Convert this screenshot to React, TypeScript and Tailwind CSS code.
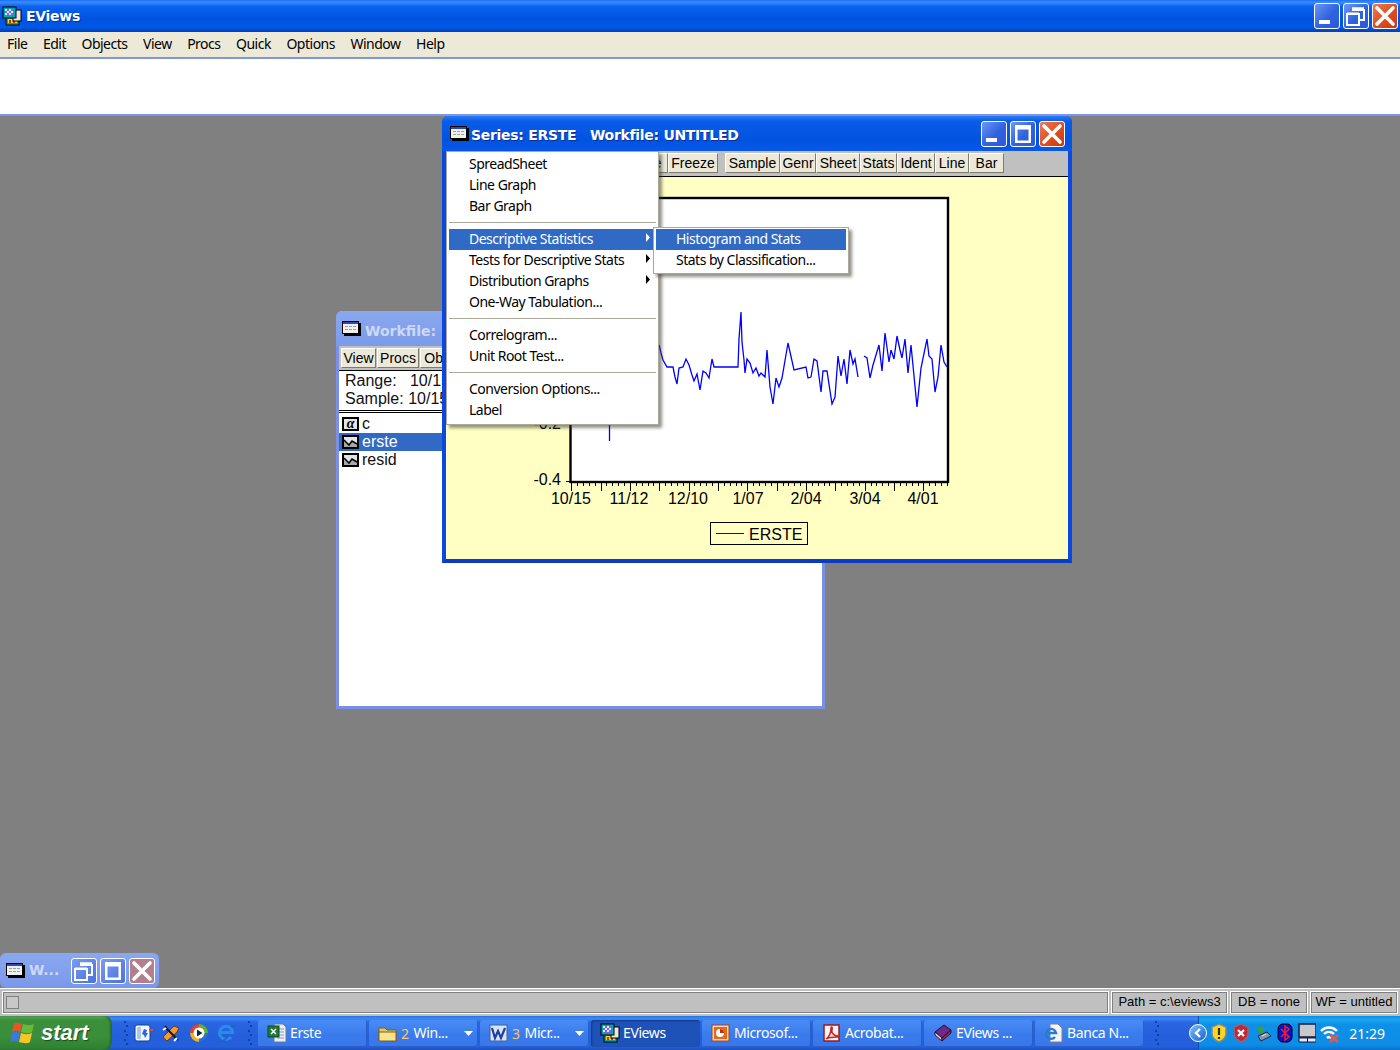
import React from 'react';

const UI = "font-['Noto_Sans',sans-serif]";
const ARIAL = "font-['Liberation_Sans',Arial,sans-serif]";
const TITLE = "font-['DejaVu_Sans',sans-serif] font-bold text-white [text-shadow:1px_1px_0_#0a2f9a]";

const MENU_BAR = ['File', 'Edit', 'Objects', 'View', 'Procs', 'Quick', 'Options', 'Window', 'Help'];

const seg1 = [[659, 345], [661, 353], [663, 360], [667, 367], [673, 367], [675, 377], [677, 384], [679, 368], [683, 367], [686, 359], [689, 365], [692, 375], [694, 381], [697, 374], [700, 390], [703, 371], [706, 373], [709, 378], [712, 359], [714, 367], [738, 367], [739, 339], [741, 312], [742, 342], [744, 360], [745, 373], [747, 359], [750, 363], [753, 373], [756, 368], [759, 376], [761, 373], [765, 377], [767, 350], [770, 387], [773, 404], [776, 378], [779, 387], [782, 378], [788, 343], [794, 370], [806, 367], [808, 378], [811, 377], [814, 359], [817, 361], [821, 392], [823, 371], [827, 371], [832, 404], [835, 397], [838, 356], [841, 376], [844, 359], [847, 384], [850, 350], [853, 364], [855, 359], [858, 377]];
const seg2 = [[864, 356], [867, 358], [870, 378], [873, 365], [879, 345], [882, 371], [885, 333], [889, 362], [891, 350], [894, 359], [897, 336], [900, 350], [902, 358], [905, 339], [908, 373], [911, 345], [917, 407], [921, 368], [927, 339], [929, 356], [932, 359], [935, 392], [938, 377], [941, 345], [944, 362], [947, 367]];
const toPoints = (s: number[][]) => s.map(p => p.join(',')).join(' ');

const EViewsIcon = () => (
  <svg width="20" height="20" viewBox="0 0 20 20" className="shrink-0">
    <rect x="4" y="10" width="13" height="9" fill="#00a8a8" stroke="#000" />
    <rect x="6" y="13" width="9" height="4" fill="#ffd800" />
    <rect x="7" y="14" width="2" height="3" fill="#e02010" />
    <rect x="11" y="14" width="2" height="3" fill="#e02010" />
    <rect x="11" y="4" width="8" height="11" fill="#e8e8e8" stroke="#000" />
    <rect x="1" y="1" width="13" height="11" fill="#00a8a8" stroke="#000" />
    <rect x="3" y="3" width="9" height="7" fill="#6868f0" />
    <path d="M3 3h2v2h-2zM7 3h2v2h-2zM5 5h2v2h-2zM9 5h2v2h-2zM3 7h2v2h-2zM7 7h2v2h-2z" fill="#e8e8ff" />
  </svg>
);

const SeriesIcon = () => (
  <svg width="19" height="15" viewBox="0 0 19 15" className="shrink-0">
    <rect x="2" y="2" width="17" height="13" fill="#000" />
    <rect x="0.5" y="0.5" width="16" height="12" fill="#f0f0f0" stroke="#000" />
    <rect x="1" y="1" width="15" height="2" fill="#2a4ab0" />
    <path d="M3 5h3v1h-3zM7 5h3v1h-3zM11 5h3v1h-3zM3 8h3v1h-3zM7 8h3v1h-3zM11 8h3v1h-3z" fill="#a0a0a0" />
  </svg>
);

const CaptionButton = ({ kind, faded }: { kind: 'min' | 'max' | 'restore' | 'close'; faded?: boolean }) => {
  const bg =
    kind === 'close'
      ? faded
        ? 'bg-[#b0808f]'
        : 'bg-[linear-gradient(135deg,#ee7a55,#dd4a1c_60%,#c93a10)]'
      : faded
        ? 'bg-[linear-gradient(135deg,#7a9bee,#4a72e0)]'
        : 'bg-[linear-gradient(135deg,#6f96f5,#2f62e0_55%,#2a5adf)]';
  return (
    <div className={`flex h-[26px] w-[26px] items-center justify-center rounded-[3px] border border-white ${bg}`}>
      <svg width="24" height="24" viewBox="0 0 24 24">
        {kind === 'min' && <rect x="4" y="16" width="11" height="4" fill="#fff" />}
        {kind === 'max' && (
          <path d="M4 3h16v18h-16z M6.500 7.500v11h11v-11z" fill="#fff" fillRule="evenodd" />
        )}
        {kind === 'restore' && (
          <g fill="none" stroke="#fff" strokeWidth="2">
            <rect x="3" y="10" width="12" height="11" />
            <path d="M3 9.500h12M8 6h12v10h-4" />
            <path d="M8 4.500h12" strokeWidth="2.500" />
          </g>
        )}
        {kind === 'close' && (
          <path d="M4 4l16 16M20 4l-16 16" stroke="#fff" strokeWidth="3.600" strokeLinecap="round" />
        )}
      </svg>
    </div>
  );
};

const ToolButton = ({ label, width }: { label: string; width: string }) => (
  <div
    className={`flex h-[20px] shrink-0 items-center justify-center border border-t-white border-l-white border-r-[#7d7b6c] border-b-[#7d7b6c] bg-[#ece9d8] pb-[1px] text-[14px] leading-none text-black ${ARIAL} ${width}`}
  >
    {label}
  </div>
);

const MenuRow = ({ label, active, arrow }: { label: string; active?: boolean; arrow?: boolean }) => (
  <div
    className={`relative flex h-[21px] items-center pb-[2px] pl-[20px] text-[14px] leading-none tracking-[-0.5px] ${active ? 'bg-[#316ac5] text-white' : 'text-black'}`}
  >
    {label}
    {arrow && (
      <svg width="6" height="9" viewBox="0 0 6 9" className="absolute right-[5px] top-[4px]">
        <path d="M1 0l4 4.500-4 4.500z" fill={active ? '#fff' : '#000'} />
      </svg>
    )}
  </div>
);

const MenuSep = () => (
  <div className="flex h-[12px] items-center pb-[2px]">
    <div className="h-px w-full bg-[#aca899]" />
  </div>
);

const Chart = () => {
  const ticks = Array.from({ length: 65 }, (_, i) => 571.7 + i * 5.87);
  const labels = [['10/15', 571], ['11/12', 629], ['12/10', 688], ['1/07', 748], ['2/04', 806], ['3/04', 865], ['4/01', 923]] as const;
  return (
    <svg viewBox="446 177 622 382" className={`block h-[382px] w-[622px] ${ARIAL}`}>
      <rect x="570.500" y="198" width="377.500" height="284" fill="#fff" stroke="#000" strokeWidth="2.400" />
      {ticks.map((x, i) => (
        <line key={x} x1={x} x2={x} y1="483" y2={i % 5 === 0 ? 491 : 486} stroke="#000" shapeRendering="crispEdges" />
      ))}
      <line x1="566" x2="570" y1="481" y2="481" stroke="#000" shapeRendering="crispEdges" />
      <polyline points={toPoints(seg1)} fill="none" stroke="#0000ff" strokeWidth="1.300" />
      <polyline points={toPoints(seg2)} fill="none" stroke="#0000ff" strokeWidth="1.300" />
      <line x1="609.500" x2="609.500" y1="415" y2="441" stroke="#0000ff" strokeWidth="1.300" />
      <text x="561" y="429" textAnchor="end" fontSize="16" fill="#000">-0.2</text>
      <text x="561" y="485" textAnchor="end" fontSize="16" fill="#000">-0.4</text>
      {labels.map(([t, x]) => (
        <text key={t} x={x} y="504" textAnchor="middle" fontSize="16" fill="#000">{t}</text>
      ))}
      <rect x="710.500" y="522.500" width="97" height="22" fill="#ffffc4" stroke="#000" shapeRendering="crispEdges" />
      <line x1="716" x2="744" y1="533.500" y2="533.500" stroke="#0000ff" shapeRendering="crispEdges" />
      <text x="749" y="540" fontSize="16" fill="#000">ERSTE</text>
    </svg>
  );
};

const SeriesWindow = () => (
  <div className="absolute left-[442px] top-0 flex h-[447px] w-[630px] flex-col rounded-t-[6px] border-x-4 border-b-4 border-x-[#0a48e0] border-b-[#0a3ac8] bg-[#0a55e6]">
    <div className="-mx-[4px] flex h-[35px] shrink-0 items-center rounded-t-[6px] bg-[linear-gradient(180deg,#2a7cf5_0%,#0a5ce8_15%,#0053e0_70%,#0a58e8_100%)] pl-[8px] pr-[7px]">
      <SeriesIcon />
      <span className={`ml-[2px] mt-[4px] whitespace-pre text-[14px] tracking-[-0.3px] ${TITLE}`}>Series: ERSTE   Workfile: UNTITLED</span>
      <div className="ml-auto flex gap-[3px]">
        <CaptionButton kind="min" />
        <CaptionButton kind="max" />
        <CaptionButton kind="close" />
      </div>
    </div>
    <div className="flex h-[25px] shrink-0 items-start bg-[#c0c0c0] pt-[2px]">
      <div className="w-[172px] shrink-0" />
      <ToolButton label="Name" width="w-[50px]" />
      <ToolButton label="Freeze" width="w-[50px]" />
      <div className="w-[7px]" />
      <ToolButton label="Sample" width="w-[55px]" />
      <ToolButton label="Genr" width="w-[36px]" />
      <ToolButton label="Sheet" width="w-[44px]" />
      <ToolButton label="Stats" width="w-[37px]" />
      <ToolButton label="Ident" width="w-[38px]" />
      <ToolButton label="Line" width="w-[34px]" />
      <ToolButton label="Bar" width="w-[35px]" />
    </div>
    <div className="min-h-0 flex-1 overflow-hidden border-t border-black bg-[#ffffc4]">
      <Chart />
    </div>

    <div className={`absolute left-[0px] top-[35px] w-[213px] border border-[#aca899] bg-white pb-[3px] pt-[2px] shadow-[3px_3px_3px_rgba(60,60,50,0.55)] ${UI}`}>
      <div className="px-[2px]">
        <MenuRow label="SpreadSheet" />
        <MenuRow label="Line Graph" />
        <MenuRow label="Bar Graph" />
        <MenuSep />
        <MenuRow label="Descriptive Statistics" active arrow />
        <MenuRow label="Tests for Descriptive Stats" arrow />
        <MenuRow label="Distribution Graphs" arrow />
        <MenuRow label="One-Way Tabulation..." />
        <MenuSep />
        <MenuRow label="Correlogram..." />
        <MenuRow label="Unit Root Test..." />
        <MenuSep />
        <MenuRow label="Conversion Options..." />
        <MenuRow label="Label" />
      </div>
    </div>
    <div className={`absolute left-[207px] top-[111px] w-[196px] border border-[#aca899] bg-white px-[2px] pb-[2px] pt-[1px] shadow-[3px_3px_3px_rgba(60,60,50,0.55)] ${UI}`}>
      <MenuRow label="Histogram and Stats" active />
      <MenuRow label="Stats by Classification..." />
    </div>
  </div>
);

const ObjectIcon = ({ alpha }: { alpha?: boolean }) => (
  <svg width="17" height="14" viewBox="0 0 17 14" className="shrink-0">
    <rect x="1" y="1" width="15" height="12" fill="#e4e4e4" stroke="#000" strokeWidth="2" />
    {alpha ? (
      <text x="8.500" y="11" textAnchor="middle" fontSize="14" fontWeight="bold" fontStyle="italic" fontFamily="'Liberation Serif',serif" fill="#000">α</text>
    ) : (
      <>
        <path d="M2 5l5 5 3-4 5 3v3H2z" fill="#a8a8a8" />
        <path d="M2 5l5 5 3-4 5 3" fill="none" stroke="#000" strokeWidth="1.500" />
      </>
    )}
  </svg>
);

const WorkfileWindow = () => (
  <div className={`absolute left-[336px] top-[195px] flex h-[398px] w-[489px] flex-col rounded-t-[6px] border-x-[3px] border-b-[3px] border-[#7b8fe4] bg-white ${ARIAL}`}>
    <div className="-mx-[3px] flex h-[35px] shrink-0 items-center rounded-t-[6px] bg-[linear-gradient(180deg,#8aa8f0,#7b9ae8)] pl-[6px]">
      <SeriesIcon />
      <span className="ml-[4px] mt-[5px] font-['DejaVu_Sans',sans-serif] text-[14px] font-bold text-[#cdd9f7]">Workfile: U</span>
    </div>
    <div className="flex h-[24px] shrink-0 items-center gap-[1px] bg-[#c0c0c0] pl-[2px]">
      <ToolButton label="View" width="w-[35px]" />
      <ToolButton label="Procs" width="w-[42px]" />
      <ToolButton label="Objects" width="w-[56px]" />
    </div>
    <div className="h-[40px] shrink-0 border-t border-black pl-[6px] pt-[1px] text-[16px] leading-[18px] text-[#111]">
      <div className="whitespace-pre">Range:   10/15</div>
      <div className="whitespace-pre">Sample: 10/15</div>
    </div>
    <div className="h-[3px] shrink-0 border-y border-black" />
    <div className="pt-[2px] text-[16px] leading-[18px] text-[#111]">
      <div className="flex h-[18px] items-center gap-[3px] pb-[1px] pl-[3px]"><ObjectIcon alpha />c</div>
      <div className="flex h-[18px] items-center gap-[3px] bg-[#316ac5] pb-[1px] pl-[3px] text-white"><ObjectIcon />erste</div>
      <div className="flex h-[18px] items-center gap-[3px] pb-[1px] pl-[3px]"><ObjectIcon />resid</div>
    </div>
  </div>
);

const MinimizedWindow = () => (
  <div className="absolute bottom-0 left-0 flex h-[35px] w-[159px] items-center rounded-[6px] bg-[linear-gradient(180deg,#8aa8f0,#7a98e8)] pl-[6px] pr-[4px]">
    <SeriesIcon />
    <span className="ml-[4px] font-['DejaVu_Sans',sans-serif] text-[14px] font-bold text-[#cdd9f7]">W...</span>
    <div className="ml-auto flex gap-[3px]">
      <CaptionButton kind="restore" faded />
      <CaptionButton kind="max" faded />
      <CaptionButton kind="close" faded />
    </div>
  </div>
);

const StatusPanel = ({ text, width }: { text: string; width: string }) => (
  <div className={`flex h-[23px] shrink-0 items-center justify-center border border-white pb-[1px] text-[13px] text-black shadow-[inset_1px_1px_0_#808080,inset_-1px_-1px_0_#808080] ${ARIAL} ${width}`}>
    {text}
  </div>
);

const Grip = () => (
  <div className="flex h-[26px] w-[4px] shrink-0 flex-col justify-between py-[1px]">
    {Array.from({ length: 6 }, (_, i) => (
      <div key={i} className={`h-[2px] w-[2px] bg-[#0f3fa8] ${i % 2 ? 'ml-[2px]' : ''}`} />
    ))}
  </div>
);

const TaskIcon = ({ kind }: { kind: string }) => (
  <svg width="20" height="20" viewBox="0 0 20 20" className="shrink-0">
    {kind === 'excel' && (
      <>
        <path d="M7 1h9l3 3v15h-12z" fill="#e8eef8" stroke="#6b7a90" />
        <path d="M10 6h7M10 9h7M10 12h7M10 15h7" stroke="#8a9ab5" />
        <rect x="1" y="3" width="11" height="11" fill="#1e7a3c" stroke="#0d4a20" />
        <path d="M4 6l5 5M9 6l-5 5" stroke="#fff" strokeWidth="1.500" />
      </>
    )}
    {kind === 'folder' && (
      <>
        <path d="M1 5h6l2 2h9v11h-17z" fill="#e8c860" stroke="#7a6020" />
        <path d="M1 9h17v9h-17z" fill="#f8e48c" stroke="#7a6020" />
      </>
    )}
    {kind === 'word' && (
      <>
        <rect x="1" y="2" width="17" height="16" fill="#d8e4f6" stroke="#4060a0" />
        <path d="M3 5l3 10 3-7 3 7 4-10" fill="none" stroke="#1f3f9f" strokeWidth="2.200" />
      </>
    )}
    {kind === 'ppt' && (
      <>
        <rect x="1" y="2" width="17" height="16" fill="#f6d8c0" stroke="#b04010" />
        <rect x="3" y="4" width="13" height="12" fill="#e06a20" />
        <circle cx="9" cy="10" r="4" fill="#fff" />
        <path d="M9 10v-4a4 4 0 0 1 4 4z" fill="#c03010" />
      </>
    )}
    {kind === 'pdf' && (
      <>
        <rect x="2" y="2" width="15" height="16" fill="#f4f4f4" stroke="#a01818" strokeWidth="1.500" />
        <path d="M4 16c3-2 5-6 5-11 0-2 2-1 1 2-1 3 2 6 6 6 2 0 1 1-1 1-4 0-8 0-11 2z" fill="none" stroke="#d02020" strokeWidth="1.500" />
      </>
    )}
    {kind === 'book' && (
      <>
        <path d="M2 9l9-7 7 5-9 8z" fill="#6a2a8a" stroke="#2a0a3a" />
        <path d="M2 9l7 6v3l-7-6z" fill="#e8e0c8" stroke="#2a0a3a" />
        <path d="M9 15l9-8v3l-9 8z" fill="#b02a2a" stroke="#2a0a3a" />
      </>
    )}
    {kind === 'iedoc' && (
      <>
        <path d="M6 1h8l4 4v14h-12z" fill="#f4f4f4" stroke="#7a8090" />
        <path d="M11 14a5 5 0 1 1 1-4H3" fill="none" stroke="#2a7ad0" strokeWidth="2.400" />
      </>
    )}
  </svg>
);

const TaskButton = ({ icon, label, count, arrow, active }: { icon: React.ReactNode; label: string; count?: string; arrow?: boolean; active?: boolean }) => (
  <div
    className={`flex h-[27px] w-[109px] shrink-0 items-center rounded-[3px] pl-[9px] text-[14px] tracking-[-0.4px] text-white ${active ? 'bg-[#1e52b7] shadow-[inset_1px_1px_2px_#123a8f]' : 'bg-[linear-gradient(180deg,#4a8cf5,#3a7cec_50%,#3976ea)] shadow-[inset_-1px_-1px_0_#2a5fc8]'}`}
  >
    {icon}
    {count && <span className="ml-[3px] text-[#fcc662]">{count}</span>}
    <span className={`pb-[1px] ${count ? 'ml-[5px]' : 'ml-[3px]'}`}>{label}</span>
    {arrow && (
      <svg width="9" height="5" viewBox="0 0 9 5" className="ml-auto mr-[5px]"><path d="M0 0h9l-4.500 5z" fill="#fff" /></svg>
    )}
  </div>
);

const QuickIcons = () => (
  <>
    <svg width="20" height="20" viewBox="0 0 20 20" className="shrink-0">
      <rect x="1" y="2" width="15" height="16" rx="2" fill="#f0f6ff" stroke="#1a3f8a" />
      <rect x="3" y="4" width="4" height="12" fill="#a8c8f4" />
      <path d="M8 11l2-5 3 1-1 3h2l-3 5-1-3z" fill="#2a6ad0" />
      <path d="M15 7h4" stroke="#e05020" strokeWidth="2" />
    </svg>
    <svg width="20" height="20" viewBox="0 0 20 20" className="shrink-0">
      <path d="M2 14L13 3l5 2-2 4L6 18z" fill="#f09a38" stroke="#6a3a10" />
      <path d="M4 3l2 3 9 9 2 2" stroke="#201810" strokeWidth="2" />
      <path d="M2 7l3-2M13 18l3-3" stroke="#fff" strokeWidth="2" />
    </svg>
    <svg width="20" height="20" viewBox="0 0 20 20" className="shrink-0">
      <path d="M10 1a9 9 0 0 1 9 9h-4a5 5 0 0 0-5-5z" fill="#60b030" />
      <path d="M1 10a9 9 0 0 1 9-9v4a5 5 0 0 0-5 5z" fill="#e84020" />
      <path d="M10 19a9 9 0 0 1-9-9h4a5 5 0 0 0 5 5z" fill="#f0b020" />
      <path d="M19 10a9 9 0 0 1-9 9v-4a5 5 0 0 0 5-5z" fill="#2a70d0" />
      <circle cx="10" cy="10" r="5.500" fill="#fff" />
      <path d="M8 6.500l5.500 3.500-5.500 3.500z" fill="#222" />
    </svg>
    <svg width="20" height="20" viewBox="0 0 20 20" className="shrink-0">
      <path d="M15 14a6.500 6.500 0 1 1 1.500-4.500H4" fill="none" stroke="#2a8ae8" strokeWidth="3" />
      <path d="M1 19c2 1 7-1 11-5M15 4c2-2 4-2 4 0" fill="none" stroke="#1f62b8" strokeWidth="1.200" />
    </svg>
  </>
);

const TrayIcons = () => (
  <div className="ml-[1px] flex items-center gap-[4px]">
    <svg width="18" height="20" viewBox="0 0 18 20"><path d="M9 1l7 3v7c0 4-4 7-7 8-3-1-7-4-7-8V4z" fill="#f8d820" stroke="#7a86a0" strokeWidth="1.500" /><path d="M9 5v7M9 14v2" stroke="#3a2a00" strokeWidth="2.200" /></svg>
    <svg width="18" height="20" viewBox="0 0 18 20"><path d="M9 1l7 3v7c0 4-4 7-7 8-3-1-7-4-7-8V4z" fill="#c02838" stroke="#8a6a80" strokeWidth="1.500" /><path d="M6 7l6 6M12 7l-6 6" stroke="#fff" strokeWidth="2.200" /></svg>
    <svg width="18" height="20" viewBox="0 0 18 20"><path d="M3 8l1-5 3 2 2-2 1 5-3 3z" fill="#3aa03a" /><path d="M4 13l9-4 4 4-10 5z" fill="#8a96a8" stroke="#1a2a40" /><path d="M8 13l4-2" stroke="#e8e8e8" /></svg>
    <svg width="18" height="20" viewBox="0 0 18 20"><rect x="2" y="1" width="14" height="18" rx="5" fill="#0a10d0" stroke="#000" /><path d="M5 6l8 8-4 3V3l4 3-8 8" fill="none" stroke="#f02020" strokeWidth="1.500" /></svg>
    <svg width="18" height="20" viewBox="0 0 18 20"><rect x="1" y="1" width="17" height="13" fill="#c8c8cc" stroke="#101a40" strokeWidth="1.500" /><path d="M1 15h17v4H1z" fill="#e8e8f0" stroke="#101a40" /><path d="M9.500 15v4" stroke="#101a40" /></svg>
    <svg width="20" height="20" viewBox="0 0 20 20"><path d="M1 8a11 11 0 0 1 16 0M4 11a7 7 0 0 1 10 0M7 15a3 3 0 0 1 4 0" fill="none" stroke="#fff" strokeWidth="2.400" /><path d="M10 12l8 7M18 12l-8 7" stroke="#e05a50" strokeWidth="2.800" /></svg>
  </div>
);

export default function App() {
  return (
    <div className={`flex h-[1050px] w-[1400px] flex-col overflow-hidden bg-[#808080] ${UI}`}>
      <div className="flex h-[32px] shrink-0 items-center bg-[linear-gradient(180deg,#1a70f5_0%,#3a8cff_7%,#0a62ee_20%,#0053e0_60%,#0058e8_85%,#0049c8_94%,#003fb8_100%)] pl-[2px] pr-[2px]">
        <EViewsIcon />
        <span className={`ml-[4px] text-[14px] tracking-[-0.3px] ${TITLE}`}>EViews</span>
        <div className="ml-auto flex gap-[3px]">
          <CaptionButton kind="min" />
          <CaptionButton kind="restore" />
          <CaptionButton kind="close" />
        </div>
      </div>
      <div className="flex h-[25px] shrink-0 items-center gap-[15.5px] bg-[#ece9d8] pb-[2px] pl-[7px] text-[14px] tracking-[-0.5px] text-black">
        {MENU_BAR.map(m => (
          <span key={m}>{m}</span>
        ))}
      </div>
      <div className="h-[59px] shrink-0 border-y-2 border-y-[#7f94e4] bg-white" />

      <div className="relative min-h-0 flex-1 bg-[#808080]">
        <WorkfileWindow />
        <SeriesWindow />
        <MinimizedWindow />
      </div>

      <div className="flex h-[28px] shrink-0 items-center gap-[2px] border-t border-white bg-[#c0c0c0] px-[2px]">
        <div className="flex h-[23px] flex-1 items-center border border-white pl-[2px] shadow-[inset_1px_1px_0_#808080,inset_-1px_-1px_0_#808080]">
          <div className="ml-[1px] h-[13px] w-[13px] border border-[#808080] bg-[#c8c8c8]" />
        </div>
        <StatusPanel text="Path = c:\eviews3" width="w-[117px]" />
        <StatusPanel text="DB = none" width="w-[78px]" />
        <StatusPanel text="WF = untitled" width="w-[88px]" />
      </div>

      <div className="flex h-[34px] shrink-0 items-center bg-[linear-gradient(180deg,#2a6fe0_0%,#3c8cf5_8%,#2a66e2_18%,#245edb_60%,#2560dc_90%,#1c4fc0_100%)]">
        <div className="flex h-[34px] w-[112px] shrink-0 items-center rounded-r-[8px] bg-[linear-gradient(180deg,#5aa85a_0%,#3c8f3c_12%,#3a8f3a_60%,#2f7f32_100%)] pl-[10px] shadow-[inset_-2px_0_2px_#2a6a2a]">
          <svg width="26" height="24" viewBox="0 0 26 24" className="shrink-0">
            <path d="M4 3c3-2 5-1 8 0l-2 8c-3-1-5-2-8 0z" fill="#e8542a" />
            <path d="M13 3c3 1 6 2 11 0l-2 8c-3 2-7 1-11 0z" fill="#6ab83a" />
            <path d="M2 12c3-2 5-1 8 0l-2 9c-2-1-5-2-8 0z" fill="#3a7ad8" />
            <path d="M11 12c3 1 6 2 11 0l-2 9c-3 2-7 1-11 0z" fill="#f4c628" />
          </svg>
          <span className={`ml-[5px] ${ARIAL} text-[22px] font-bold italic leading-none text-white [text-shadow:1px_1px_1px_#1a4a1a]`}>start</span>
        </div>
        <div className="ml-[12px]"><Grip /></div>
        <div className="ml-[6px] flex w-[102px] shrink-0 items-center justify-between">
          <QuickIcons />
        </div>
        <div className="ml-[12px]"><Grip /></div>
        <div className="ml-[6px] flex gap-[2px]">
          <TaskButton icon={<TaskIcon kind="excel" />} label="Erste" />
          <TaskButton icon={<TaskIcon kind="folder" />} count="2" label="Win..." arrow />
          <TaskButton icon={<TaskIcon kind="word" />} count="3" label="Micr..." arrow />
          <TaskButton icon={<EViewsIcon />} label="EViews" active />
          <TaskButton icon={<TaskIcon kind="ppt" />} label="Microsof..." />
          <TaskButton icon={<TaskIcon kind="pdf" />} label="Acrobat..." />
          <TaskButton icon={<TaskIcon kind="book" />} label="EViews ..." />
          <TaskButton icon={<TaskIcon kind="iedoc" />} label="Banca N..." />
        </div>
        <div className="ml-[11px]"><Grip /></div>
        <div className="ml-auto flex h-[34px] w-[202px] shrink-0 items-center border-l border-[#0f4fb0] bg-[linear-gradient(180deg,#0f8be8_0%,#18a8f0_10%,#0f90e8_25%,#0d8de6_85%,#0a70d0_100%)] pr-[15px]">
          <div className="-ml-[10px] mr-[2px] flex h-[18px] w-[18px] shrink-0 items-center justify-center rounded-full border border-white bg-[linear-gradient(135deg,#7ac0ff,#1a60d0)]">
            <svg width="10" height="10" viewBox="0 0 10 10"><path d="M7 1L3 5l4 4" fill="none" stroke="#fff" strokeWidth="2.400" /></svg>
          </div>
          <TrayIcons />
          <span className="ml-auto text-[14px] text-white">21:29</span>
        </div>
      </div>
    </div>
  );
}
